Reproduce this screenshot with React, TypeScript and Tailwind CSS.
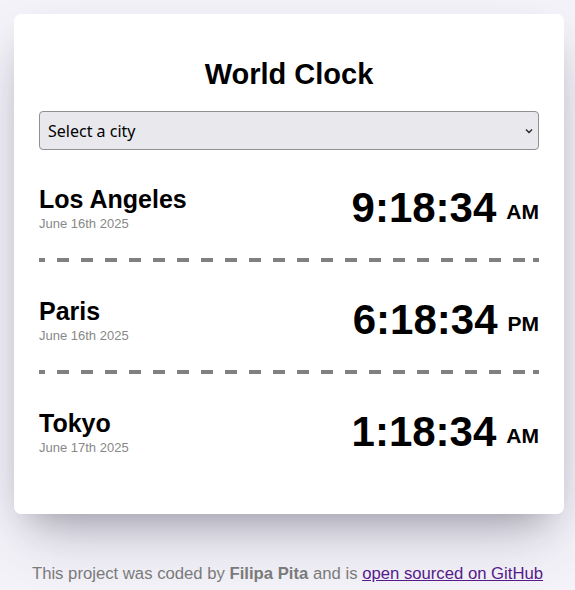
import React from 'react'

const cities = [
  { name: 'Los Angeles', date: 'June 16th 2025', time: '9:18:34', period: 'AM' },
  { name: 'Paris', date: 'June 16th 2025', time: '6:18:34', period: 'PM' },
  { name: 'Tokyo', date: 'June 17th 2025', time: '1:18:34', period: 'AM' },
]

function CityRow({ city, last }: { city: (typeof cities)[number]; last: boolean }) {
  return (
    <>
      <div className="flex items-center justify-between pt-[34px] pb-[26px]">
        <div>
          <div className="text-[25px] font-bold leading-[1.15] text-black">{city.name}</div>
          <div className="mt-[4px] text-[13px] leading-[1.15] text-[#888888]">{city.date}</div>
        </div>
        <div className="flex items-baseline font-bold text-black">
          <span className="text-[42px] leading-[48px]">{city.time}</span>
          <span className="relative -top-[3px] ml-[10px] text-[21px]">{city.period}</span>
        </div>
      </div>
      {/* dashed separator */}
      {!last && (
        <div className="h-[4px] bg-[repeating-linear-gradient(to_right,#808080_0_12px,transparent_12px_24px)] bg-[position:-6px_0]" />
      )}
    </>
  )
}

export default function App() {
  return (
    <div className="min-h-[590px] bg-[#f4f3f9] pt-[14px] font-['Liberation_Sans',Arial,sans-serif]">
      {/* card */}
      <div className="ml-[14px] w-[550px] rounded-[7px] bg-white px-[25px] pt-[44px] pb-[32px] shadow-[0_30px_60px_-12px_rgba(50,50,93,0.25),0_18px_36px_-18px_rgba(0,0,0,0.3)]">
        <h1 className="text-center text-[29px] font-bold leading-[1.15] text-black">World Clock</h1>
        <div className="relative mt-[20px]">
          <select className="h-[39px] w-full appearance-none rounded-[4px] border border-[#8f8f94] bg-[#e9e8ed] pl-[8px] font-['Noto_Sans','Open_Sans',sans-serif] text-[16px] text-black outline-none">
            <option>Select a city</option>
          </select>
          <svg
            className="pointer-events-none absolute right-[6px] top-[17px]"
            width="8"
            height="6"
            viewBox="0 0 8 6"
            fill="none"
          >
            <path d="M1 1.5 4 4.5 7 1.5" stroke="#222" strokeWidth="1.3" />
          </svg>
        </div>
        {cities.map((c, i) => (
          <CityRow key={c.name} city={c} last={i === cities.length - 1} />
        ))}
      </div>

      <p className="mt-[50px] text-center text-[16.7px] leading-[1.15] text-[#7a7a7a]">
        This project was coded by <strong className="font-bold">Filipa Pita</strong> and is{' '}
        <a href="#" className="text-[#551a8b] underline">
          open sourced on GitHub
        </a>
      </p>
    </div>
  )
}
